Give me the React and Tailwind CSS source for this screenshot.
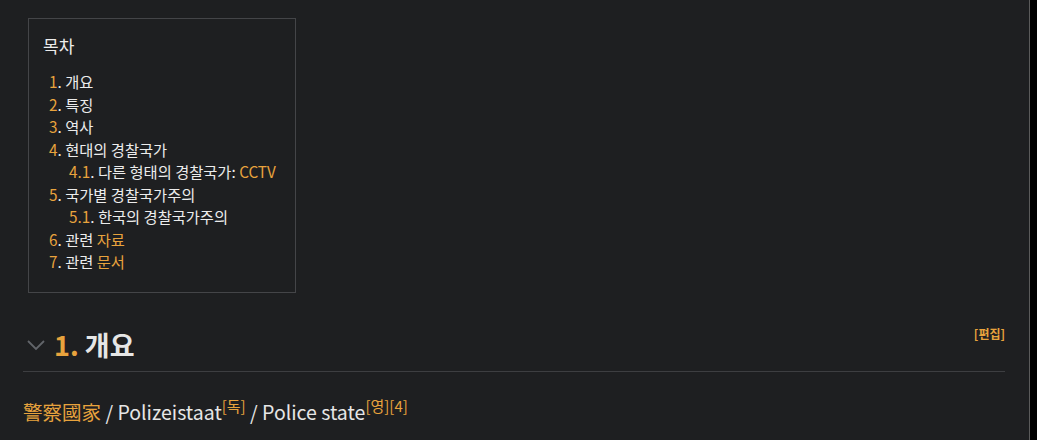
const toc = [
  { num: "1.", text: "개요" },
  { num: "2.", text: "특징" },
  { num: "3.", text: "역사" },
  { num: "4.", text: "현대의 경찰국가" },
  { num: "4.1.", text: "다른 형태의 경찰국가: ", link: "CCTV", sub: true },
  { num: "5.", text: "국가별 경찰국가주의" },
  { num: "5.1.", text: "한국의 경찰국가주의", sub: true },
  { num: "6.", text: "관련 ", link: "자료" },
  { num: "7.", text: "관련 ", link: "문서" },
];

export default function App() {
  return (
    <div className="flex h-[440px] w-[1037px] bg-black font-['Noto_Sans_CJK_KR','Noto_Sans',sans-serif]">
      <div className="w-[1030px] border-r border-[#5a5a5a] bg-[#1e1f21] pl-[23px] pr-[24px] pt-[18px]">
        {/* 목차 */}
        <div className="ml-[5px] w-[268px] border border-[#444548] pb-[19px] pl-[14px] pt-[14px]">
          <div className="text-[17px] leading-[26px] text-[#ececec]">목차</div>
          <ul className="mt-[11px] text-[15.3px] leading-[22.5px] text-[#ececec]">
            {toc.map((item) => (
              <li key={item.num} className={item.sub ? "pl-[26px]" : "pl-[6px]"}>
                <span className="text-[#e8a33d]">{item.num.slice(0, -1)}</span>. {item.text}
                {item.link && <span className="text-[#e8a33d]">{item.link}</span>}
              </li>
            ))}
          </ul>
        </div>

        {/* 1. 개요 */}
        <div className="mt-[30px] flex items-center border-b border-[#3d3e41] pb-[4px]">
          <svg width="20" height="12" viewBox="0 0 20 12" className="ml-[3px] text-[#62656a]">
            <polyline points="2,2 10,10 18,2" fill="none" stroke="currentColor" strokeWidth="1.8" />
          </svg>
          <h2 className="ml-[8px] text-[27px] font-bold leading-[44px] text-[#e6e6e6]">
            <span className="text-[#e8a33d]">1.</span> 개요
          </h2>
          <span className="mb-[22px] ml-auto text-[12px] font-bold text-[#e8a33d]">[편집]</span>
        </div>
        <p className="mt-[25px] text-[19.5px] leading-[30px] text-[#e6e6e6]">
          <span className="text-[#e8a33d]">警察國家</span> / Polizeistaat
          <sup className="text-[15px] text-[#e8a33d]">[독]</sup> / Police state
          <sup className="text-[15px] text-[#e8a33d]">[영][4]</sup>
        </p>
      </div>
    </div>
  );
}
